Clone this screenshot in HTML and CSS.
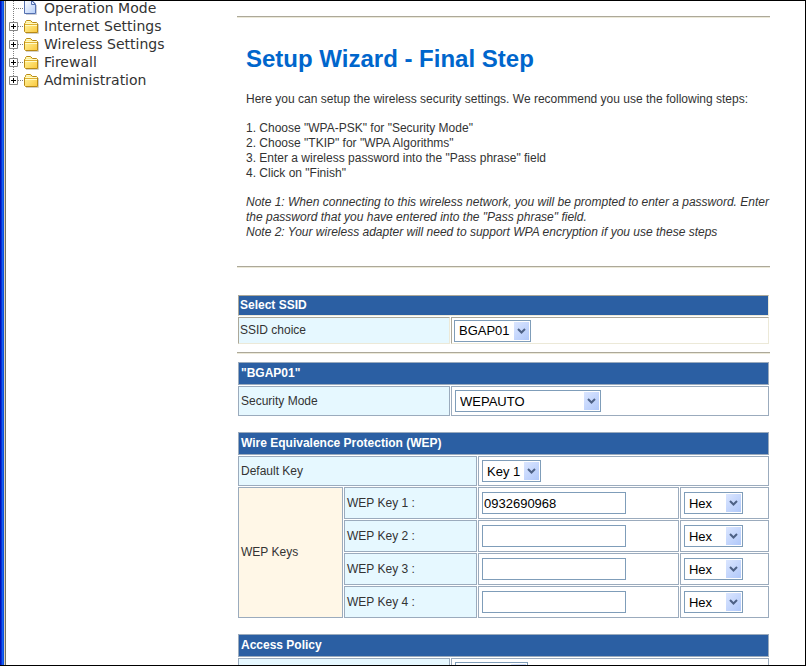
FILE: index.html
```html
<!DOCTYPE html>
<html lang="en">
<head>
    <meta charset="UTF-8">
    <meta name="viewport" content="width=device-width, initial-scale=1.0">
    <title>Setup Wizard</title>
    <link rel="stylesheet" href="styles.css">
</head>
<body>
    <!-- Tree icons -->
    <svg class="defs" width="0" height="0" aria-hidden="true">
        <defs>
            <linearGradient id="folder-fill" x1="0" y1="0" x2="1" y2="1">
                <stop offset="0" stop-color="#fff9a8"/>
                <stop offset="1" stop-color="#fbc83c"/>
            </linearGradient>
            <linearGradient id="page-fill" x1="0" y1="0" x2="1" y2="1">
                <stop offset="0" stop-color="#ffffff"/>
                <stop offset="1" stop-color="#b4cdf8"/>
            </linearGradient>
            <symbol id="folder" viewBox="0 0 16 14">
                <path d="M2 13.500H14.500V4" fill="none" stroke="#d4d0c4"/>
                <path d="M.5 11.500V3.500L1.500 2.500V1.500L2.500 .5H6.500L8.500 2.500H12.500L13.500 3.500V12.500H1.500Z" fill="url(#folder-fill)" stroke="#b98a14"/>
                <path d="M1 4.500H13" stroke="#e0b030"/>
                <path d="M1 5.500H13M3 1.500H6M2 3.500H13" stroke="#fffbc8"/>
            </symbol>
            <symbol id="page" viewBox="0 0 13 15">
                <path d="M2 14.500H12.500V5" fill="none" stroke="#c8ccd8"/>
                <path d="M.5 .5H8L11.500 4V13.500H.5Z" fill="url(#page-fill)" stroke="#5470b0"/>
                <path d="M7.500 .5V4.500H11.500Z" fill="#dfe9fd" stroke="#5470b0"/>
            </symbol>
            <symbol id="plus" viewBox="0 0 9 9">
                <path d="M.5 .5H8.500V8.500H.5Z" fill="#fff" stroke="#848484"/>
                <path d="M2 4.500H7M4.500 2V7" stroke="#000"/>
            </symbol>
            <symbol id="branch" viewBox="0 0 34 18">
                <path d="M7.500 0V18M8 9.500H18" fill="none" stroke="#808080" stroke-dasharray="1 1"/>
                <use href="#plus" x="3" y="5" width="9" height="9"/>
                <use href="#folder" x="18" y="3" width="16" height="14"/>
            </symbol>
        </defs>
    </svg>

    <!-- Sidebar -->
    <nav class="sidebar">
        <a href="#" class="menu-item">
            <svg class="menu-icon" viewBox="0 0 34 18" aria-hidden="true">
                <path d="M7.500 0V18M8 9.500H18" fill="none" stroke="#808080" stroke-dasharray="1 1"/>
                <use href="#page" x="18" y="1" width="13" height="15"/>
            </svg>
            <span class="menu-text">Operation Mode</span>
        </a>
        <a href="#" class="menu-item"><svg class="menu-icon" aria-hidden="true"><use href="#branch"/></svg><span class="menu-text">Internet Settings</span></a>
        <a href="#" class="menu-item"><svg class="menu-icon" aria-hidden="true"><use href="#branch"/></svg><span class="menu-text">Wireless Settings</span></a>
        <a href="#" class="menu-item"><svg class="menu-icon" aria-hidden="true"><use href="#branch"/></svg><span class="menu-text">Firewall</span></a>
        <a href="#" class="menu-item">
            <svg class="menu-icon" viewBox="0 0 34 18" aria-hidden="true">
                <path d="M7.500 0V9M8 9.500H18" fill="none" stroke="#808080" stroke-dasharray="1 1"/>
                <use href="#plus" x="3" y="5" width="9" height="9"/>
                <use href="#folder" x="18" y="3" width="16" height="14"/>
            </svg>
            <span class="menu-text">Administration</span>
        </a>
    </nav>

    <main class="main-content">
        <hr>
        <div class="intro">
            <h1>Setup Wizard - Final Step</h1>
            <p>Here you can setup the wireless security settings. We recommend you use the following steps:</p>
            <p>
                1. Choose "WPA-PSK" for "Security Mode"<br>
                2. Choose "TKIP" for "WPA Algorithms"<br>
                3. Enter a wireless password into the "Pass phrase" field<br>
                4. Click on "Finish"
            </p>
            <p class="note">
                Note 1: When connecting to this wireless network, you will be prompted to enter a password. Enter the password that you have entered into the "Pass phrase" field.<br>
                Note 2: Your wireless adapter will need to support WPA encryption if you use these steps
            </p>
        </div>
        <hr>

        <form>
            <table class="ssid">
                <colgroup><col class="col-label"><col></colgroup>
                <tr><th colspan="2">Select SSID</th></tr>
                <tr>
                    <td class="head"><label for="ssid">SSID choice</label></td>
                    <td><select id="ssid" class="w-ssid"><option>BGAP01</option></select></td>
                </tr>
            </table>
            <hr>

            <table>
                <colgroup><col class="col-label"><col></colgroup>
                <tr><th colspan="2">"BGAP01"</th></tr>
                <tr>
                    <td class="head"><label for="mode">Security Mode</label></td>
                    <td><select id="mode" class="w-mode"><option>WEPAUTO</option></select></td>
                </tr>
            </table>

            <!-- WEP -->
            <table class="wep">
                <colgroup><col class="col-group"><col class="col-key"><col><col class="col-type"></colgroup>
                <tr><th colspan="4">Wire Equivalence Protection (WEP)</th></tr>
                <tr>
                    <td class="head" colspan="2"><label for="default_key">Default Key</label></td>
                    <td colspan="2"><select id="default_key" class="w-key"><option>Key 1</option></select></td>
                </tr>
                <tr class="key-row">
                    <td class="group" rowspan="4">WEP Keys</td>
                    <td class="head"><label for="key1">WEP Key 1 :</label></td>
                    <td><input type="text" id="key1" value="0932690968"></td>
                    <td><select class="w-key" aria-label="WEP Key 1 type"><option>Hex</option></select></td>
                </tr>
                <tr class="key-row">
                    <td class="head"><label for="key2">WEP Key 2 :</label></td>
                    <td><input type="text" id="key2"></td>
                    <td><select class="w-key" aria-label="WEP Key 2 type"><option>Hex</option></select></td>
                </tr>
                <tr class="key-row">
                    <td class="head"><label for="key3">WEP Key 3 :</label></td>
                    <td><input type="text" id="key3"></td>
                    <td><select class="w-key" aria-label="WEP Key 3 type"><option>Hex</option></select></td>
                </tr>
                <tr class="key-row">
                    <td class="head"><label for="key4">WEP Key 4 :</label></td>
                    <td><input type="text" id="key4"></td>
                    <td><select class="w-key" aria-label="WEP Key 4 type"><option>Hex</option></select></td>
                </tr>
            </table>

            <!-- Access policy -->
            <table>
                <colgroup><col class="col-label"><col></colgroup>
                <tr><th colspan="2">Access Policy</th></tr>
                <tr>
                    <td class="head"></td>
                    <td><select class="w-policy" aria-label="Policy"></select></td>
                </tr>
            </table>
        </form>
    </main>
</body>
</html>
```

FILE: styles.css
```css
* {
    box-sizing: border-box;
}

body {
    font-family: Arial, "Liberation Sans", sans-serif;
    font-size: 12px;
    line-height: 15px;
    color: #333;
    background: linear-gradient(to right, #0012b8 0 1px, #0831d9 1px 2px, #1660ee 2px 3px, #0a50e6 3px 4px, #d8d2bd 4px 5px, #716f64 5px 6px, #fff 6px);
    display: flex;
    height: 100vh;
    margin: 0;
    padding-left: 6px;
    overflow: hidden;
    border: 1px solid #000;
    border-left: 0;
}

.defs {
    position: absolute;
}

/* Sidebar */
.sidebar {
    width: 231px;
    flex-shrink: 0;
    margin-top: -2px;
}

.menu-item {
    display: flex;
    align-items: center;
    height: 18px;
    font-family: Verdana, "DejaVu Sans", sans-serif;
    font-size: 14px;
    color: #333;
    text-decoration: none;
}

.menu-icon {
    width: 34px;
    height: 18px;
    margin-right: 4px;
}

/* Content */
.main-content {
    flex: 1;
    padding: 15px 35px 0 0;
}

hr {
    height: 2px;
    margin: 0;
    border: 0;
    border-top: 1px solid #aca899;
    border-bottom: 1px solid #ece9d8;
}

.intro {
    padding: 26px 0 26px 9px;
}

h1 {
    margin: 0 0 18px;
    font-size: 24px;
    line-height: 30px;
    color: #0066cc;
}

p {
    margin: 0 0 14px;
}

p.note {
    margin-bottom: 0;
    font-style: italic;
}

/* Tables */
table {
    width: 100%;
    table-layout: fixed;
    border-spacing: 1px;
    margin-bottom: 14px;
}

th, td {
    height: 30px;
    padding: 0 2px;
    border: 1px solid #9babbd;
    text-align: left;
}

th {
    height: 23px;
    background: #2b5fa3;
    color: #fff;
}

.head {
    background: #e6f8ff;
}

.group {
    background: #fff7e7;
}

.key-row td {
    height: 32px;
}

.ssid {
    margin: 26px 0 7px;
}

.ssid th, .ssid td {
    height: 27px;
    padding: 0 1px;
    border-color: #aca899 #ece9d8 #ece9d8 #aca899;
}

.ssid th {
    height: 21px;
}

.ssid + hr {
    margin-bottom: 7px;
}

.col-label {
    width: 212px;
}

.col-group {
    width: 105px;
}

.col-key {
    width: 133px;
}

.col-type {
    width: 89px;
}

/* Form controls */
select, input {
    display: block;
    height: 22px;
    margin: 0 1px;
    border: 1px solid #7f9db9;
    border-radius: 0;
    font-family: Arial, "Liberation Sans", sans-serif;
    font-size: 13px;
    color: #000;
}

input {
    width: 144px;
    padding: 0 1px;
}

select {
    appearance: none;
    padding: 0 4px;
    background:
        url("data:image/svg+xml,%3Csvg xmlns='http://www.w3.org/2000/svg' width='9' height='6'%3E%3Cpath d='M1 1L4.500 4.500L8 1' fill='none' stroke='%234d6185' stroke-width='2'/%3E%3C/svg%3E") no-repeat right 4px center,
        linear-gradient(135deg, #dbe6ff, #b0c8fa) no-repeat right 1px center / 15px calc(100% - 2px),
        #fff;
}

.w-ssid {
    width: 77px;
}

.w-mode {
    width: 146px;
}

.w-key {
    width: 59px;
}

.w-policy {
    width: 73px;
}
```
